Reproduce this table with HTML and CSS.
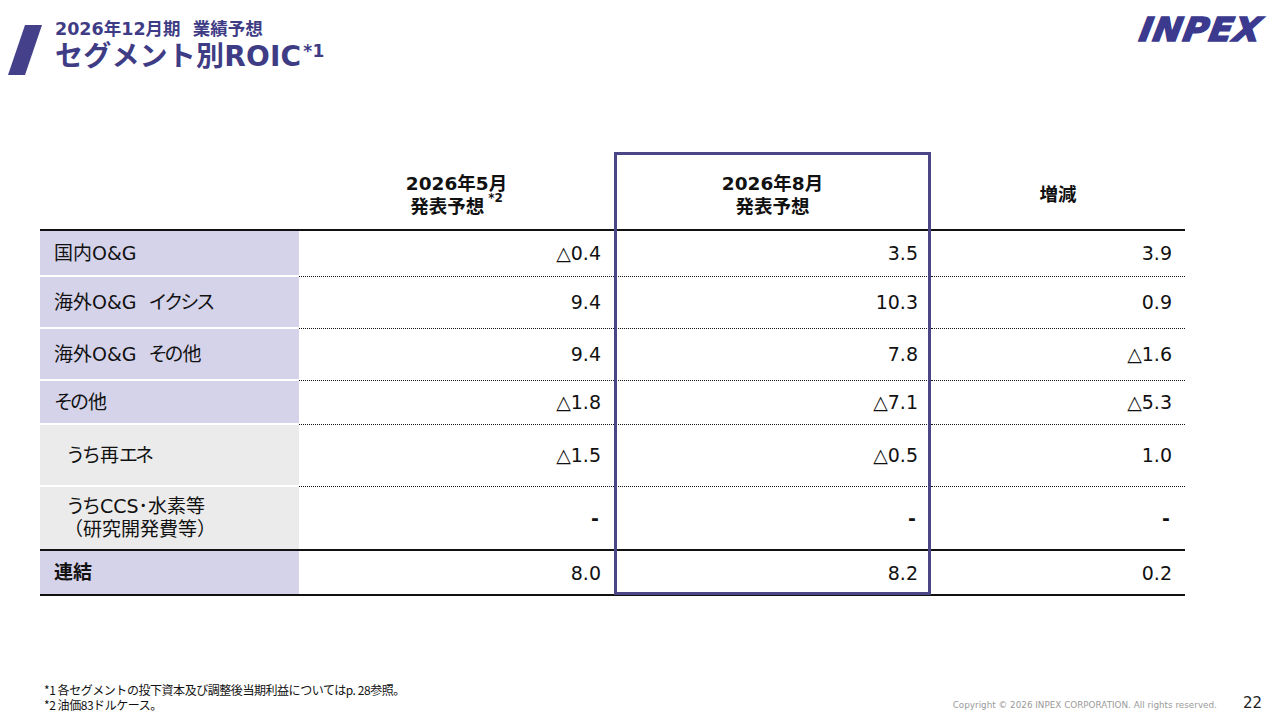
FILE: index.html
```html
<!DOCTYPE html>
<html lang="ja">
<head>
<meta charset="utf-8">
<title>セグメント別ROIC</title>
<link rel="stylesheet" href="styles.css">
</head>
<body>
<div class="page">
  <header class="top">
    <svg class="slash" width="40" height="56" viewBox="0 0 40 56" aria-hidden="true">
      <polygon points="17,0 34,0 17,50 0,50" fill="#44418a"/>
    </svg>
    <div class="titles">
      <div class="kicker">2026年12月期&nbsp;&nbsp;業績予想</div>
      <h1 class="title">セグメント別ROIC<sup class="title-sup">*1</sup></h1>
    </div>
    <div class="logo">INPEX</div>
  </header>

  <main class="table-wrap">
    <table class="roic">
      <colgroup>
        <col class="c-label">
        <col class="c-may">
        <col class="c-aug">
        <col class="c-diff">
      </colgroup>
      <thead>
        <tr class="r-head">
          <th class="h-label"></th>
          <th>2026年5月<br>発表予想<sup class="hsup">*2</sup></th>
          <th>2026年8月<br>発表予想</th>
          <th>増減</th>
        </tr>
      </thead>
      <tbody>
        <tr class="r1">
          <th class="lbl main">国内O&amp;G</th>
          <td>△0.4</td><td>3.5</td><td>3.9</td>
        </tr>
        <tr class="r2">
          <th class="lbl main">海外O&amp;G&nbsp;&nbsp;<span class="kn">イクシス</span></th>
          <td>9.4</td><td>10.3</td><td>0.9</td>
        </tr>
        <tr class="r3">
          <th class="lbl main">海外O&amp;G&nbsp;&nbsp;<span class="kn">その</span>他</th>
          <td>9.4</td><td>7.8</td><td>△1.6</td>
        </tr>
        <tr class="r4">
          <th class="lbl main"><span class="kn">その</span>他</th>
          <td>△1.8</td><td>△7.1</td><td>△5.3</td>
        </tr>
        <tr class="r5">
          <th class="lbl sub"><span class="kn">うち</span>再<span class="kn">エネ</span></th>
          <td>△1.5</td><td>△0.5</td><td>1.0</td>
        </tr>
        <tr class="r6">
          <th class="lbl sub"><span class="kn">うち</span>CCS･水素等<br><span class="paren">（研究開発費等）</span></th>
          <td class="dash">-</td><td class="dash">-</td><td class="dash">-</td>
        </tr>
        <tr class="r7">
          <th class="lbl main strong">連結</th>
          <td>8.0</td><td>8.2</td><td>0.2</td>
        </tr>
      </tbody>
    </table>
    <div class="highlight" aria-hidden="true"></div>
  </main>

  <footer class="foot">
    <div class="notes">
      <p>*1 各セグメントの投下資本及び調整後当期利益についてはp. 28参照。</p>
      <p>*2 油価83ドルケース。</p>
    </div>
    <div class="copy">Copyright © 2026 INPEX CORPORATION. All rights reserved.</div>
    <div class="pno">22</div>
  </footer>
</div>
</body>
</html>
```

FILE: styles.css
```css
* { box-sizing: border-box; }
html, body { margin: 0; padding: 0; background: #fff; }
body {
  font-family: "DejaVu Sans", "Noto Sans CJK JP", sans-serif;
  color: #111;
}
.page {
  width: 1280px;
  height: 720px;
  display: flex;
  flex-direction: column;
  overflow: hidden;
}

/* header */
.top {
  height: 100px;
  display: flex;
  align-items: flex-start;
  padding: 0 15px 0 8px;
}
.slash {
  margin-top: 25px;
  flex: none;
}
.titles {
  margin-left: 7px;
  padding-top: 18px;
  color: #3f3c86;
  font-weight: bold;
}
.kicker {
  font-size: 17.5px;
  line-height: 22px;
  white-space: pre;
}
.title {
  margin: 0;
  font-size: 28px;
  line-height: 34px;
  font-weight: bold;
  letter-spacing: 0.2px;
}
.title-sup {
  font-size: 17px;
  line-height: 0;
  vertical-align: 9px;
  margin-left: 2px;
}
.logo {
  margin-left: auto;
  margin-top: 13px;
  font-family: "DejaVu Sans", sans-serif;
  font-weight: bold;
  font-style: oblique;
  font-size: 33px;
  line-height: 34px;
  letter-spacing: 1px;
  color: #3b3a8e;
  -webkit-text-stroke: 1.6px #3b3a8e;
  transform: skewX(-10deg) scaleX(1.04);
  transform-origin: left center;
  margin-right: 8px;
}

/* table */
.table-wrap {
  position: relative;
  margin: 52px 0 0 40px;
  width: 1145px;
}
.roic {
  width: 1145px;
  border-collapse: collapse;
  table-layout: fixed;
  font-size: 19px;
}
.c-label { width: 259px; }
.c-may { width: 315px; }
.c-aug { width: 317px; }
.c-diff { width: 254px; }

.r-head th {
  height: 78px;
  font-size: 18.5px;
  line-height: 23px;
  font-weight: bold;
  text-align: center;
  vertical-align: middle;
  padding: 8px 0 0;
  border-bottom: 2px solid #111;
}
.hsup {
  font-size: 12px;
  line-height: 0;
  vertical-align: 11px;
  margin-left: 4px;
}

.roic tbody td {
  text-align: right;
  padding: 0 13px 0 0;
  vertical-align: middle;
  border-bottom: 1px dotted #111;
  line-height: 24px;
}
.roic tbody .lbl {
  text-align: left;
  font-weight: normal;
  padding: 0 0 0 14px;
  line-height: 23px;
  border-bottom: 2px solid #fff;
  white-space: nowrap;
}
.kn { letter-spacing: -3px; margin-right: 2px; }
.roic tbody .lbl.main { background: #d5d3ea; }
.roic tbody .lbl.sub { background: #ebebeb; padding-left: 26px; }
.roic tbody .lbl.strong { font-weight: bold; }
.paren { margin-left: -2px; }

.r1 { height: 46px; }
.r2 { height: 52px; }
.r3 { height: 52px; }
.r4 { height: 44px; }
.r5 { height: 62px; }
.r6 { height: 64px; }
.r7 { height: 45px; }

.roic tbody .r6 td,
.roic tbody .r6 .lbl,
.roic tbody .r7 td,
.roic tbody .r7 .lbl { border-bottom: 2px solid #111; }
.roic tbody td.dash { font-weight: bold; padding-right: 15px; }

.highlight {
  position: absolute;
  left: 574px;
  top: 0;
  width: 317px;
  height: 443px;
  border: 3px solid #4b4786;
  pointer-events: none;
}

/* footer */
.foot {
  margin-top: auto;
  display: flex;
  align-items: flex-end;
  padding: 0 18px 8px 44px;
}
.notes p {
  margin: 0;
  font-family: "Noto Sans CJK JP", sans-serif;
  font-size: 12px;
  line-height: 15px;
  height: 15px;
  letter-spacing: -0.45px;
  color: #111;
  white-space: pre;
}
.copy {
  margin-left: auto;
  font-size: 8.8px;
  color: #9a9a9a;
  line-height: 12px;
  margin-bottom: 1px;
}
.pno {
  margin-left: 26px;
  font-size: 15px;
  line-height: 18px;
  color: #222;
}
```
